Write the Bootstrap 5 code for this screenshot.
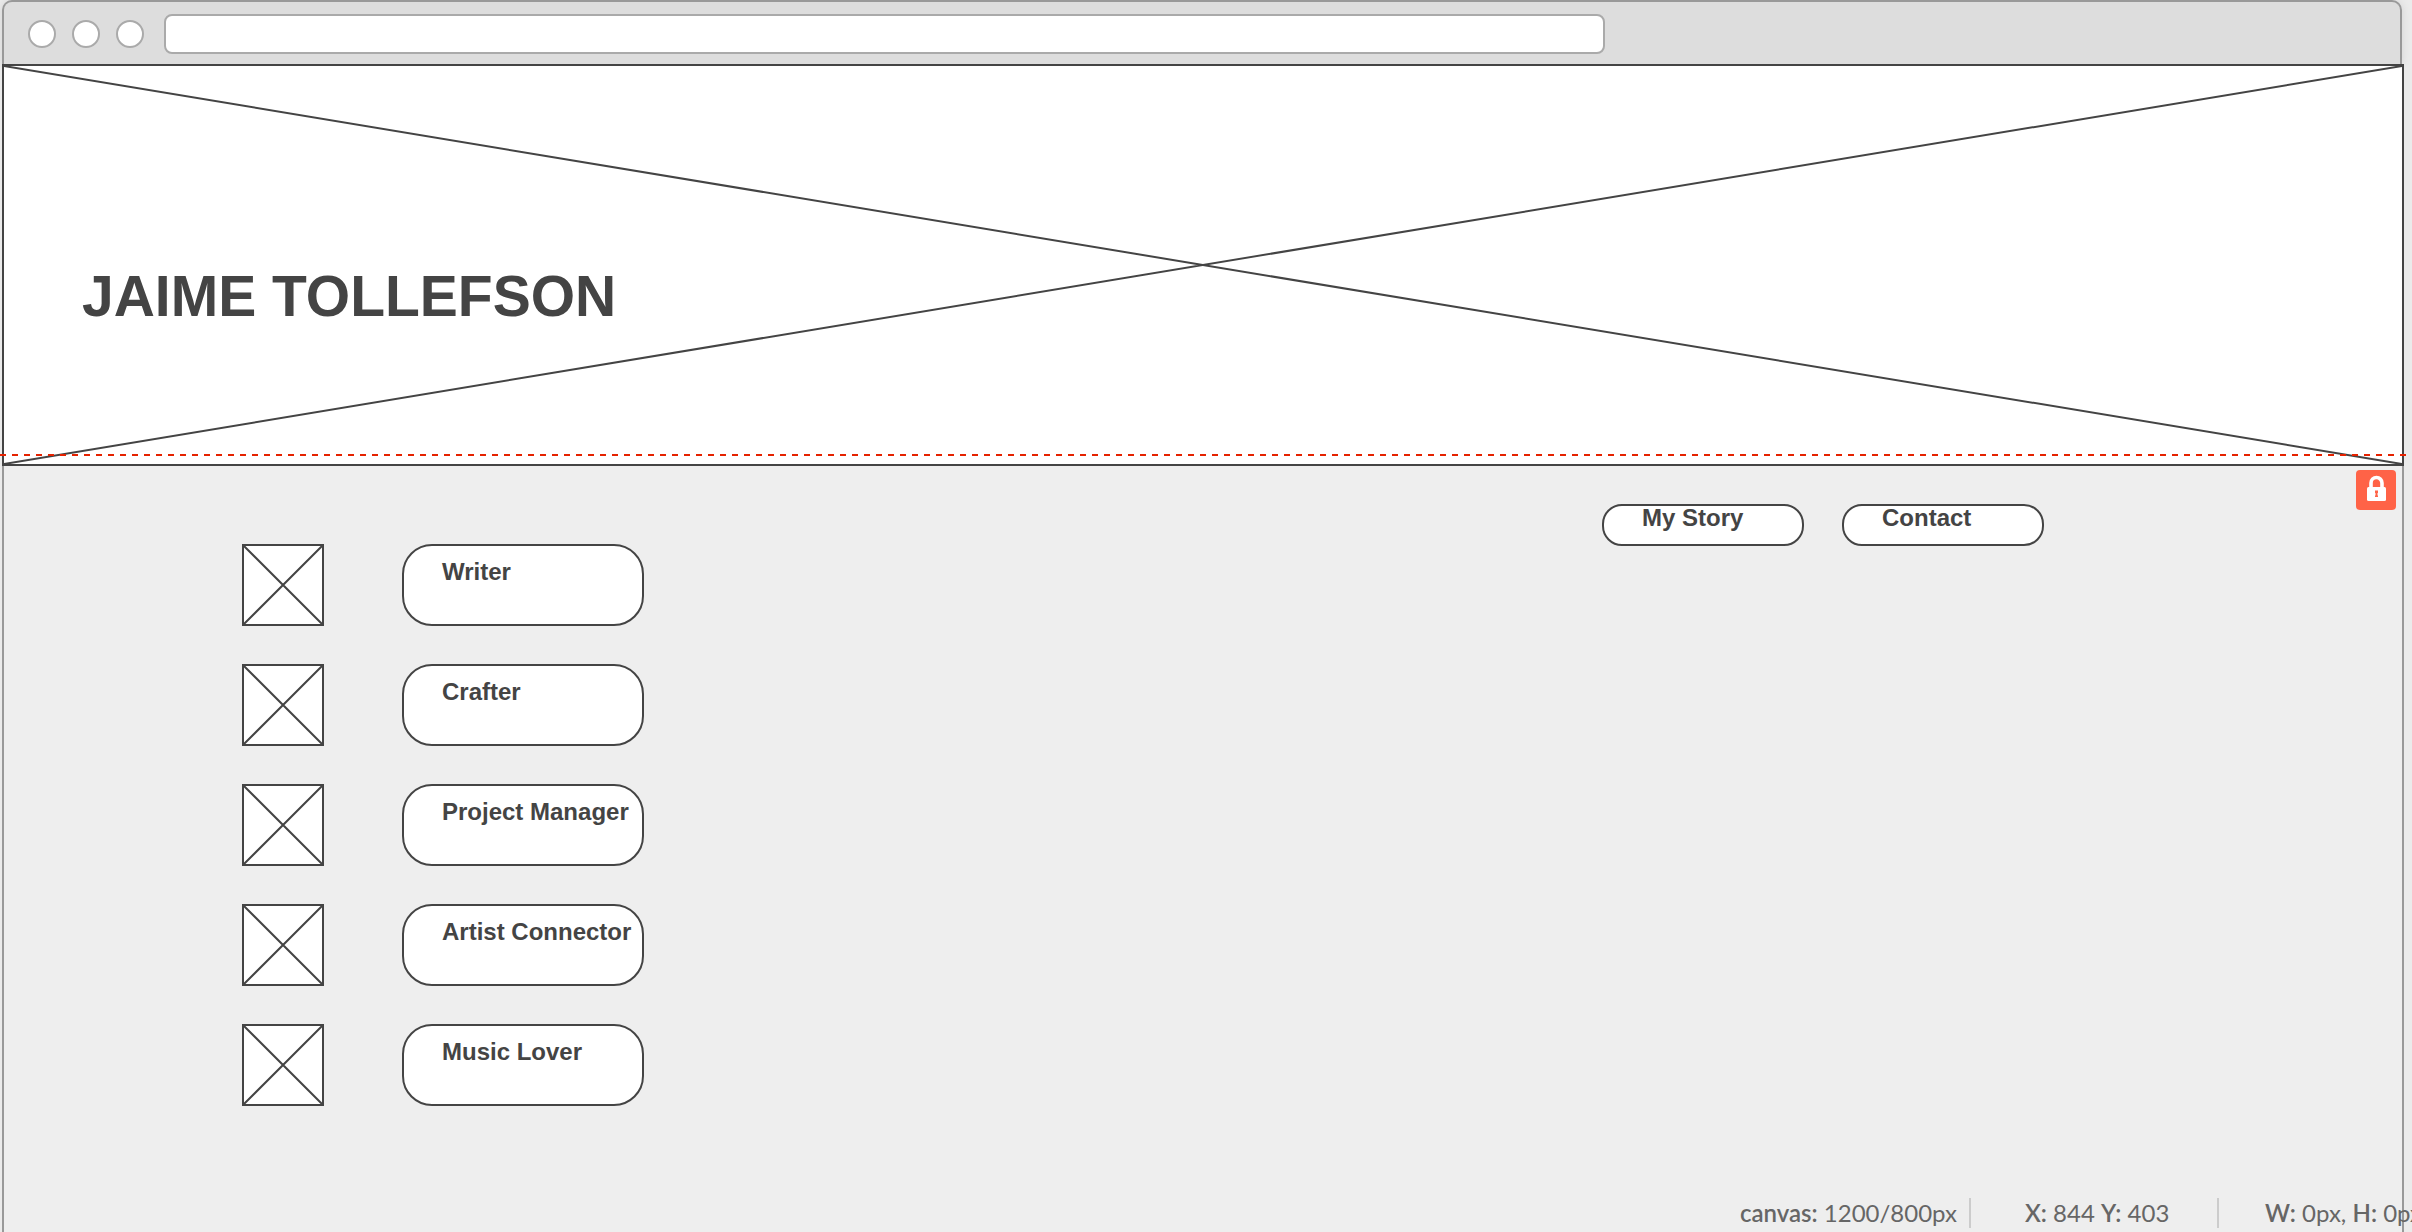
<!DOCTYPE html>
<html lang="en">
<head>
<meta charset="utf-8">
<meta name="viewport" content="width=device-width, initial-scale=1">
<title>Jaime Tollefson – wireframe</title>
<link href="https://cdn.jsdelivr.net/npm/bootstrap@5.3.0/dist/css/bootstrap.min.css" rel="stylesheet">
<style>
:root { --ink: #444; --line: #999; }
body { background: #ebebeb; color: var(--ink); font-family: "Liberation Sans", Arial, sans-serif; }
.stage { padding: 0 8px 0 2px; }
.toolbar { height: 64px; margin-right: 2px; padding: 2px 0 0 24px; background: #ddd; border: 2px solid var(--line); border-bottom: 0; border-radius: 10px 10px 0 0; box-shadow: 0 0 10px rgba(0,0,0,.1); }
.dot { width: 28px; height: 28px; margin-right: 16px; background: #fff; border: 2px solid #aaa; border-radius: 50%; }
.address { width: calc(60% + 18px); height: 40px; margin-left: 4px; padding: 0 12px; background: #fff; border: 2px solid #aaa; border-radius: 8px; }
.hero { height: 402px; background: #fff; border: 2px solid var(--ink); }
.cross { stroke: var(--ink); stroke-width: 2; fill: none; }
.hero-title { padding: 198px 0 0 78px; font-size: 57px; line-height: 64px; font-weight: 700; }
.guide { left: 0; right: 6px; top: 454px; height: 2px; background: repeating-linear-gradient(90deg, #e52200 0 6px, transparent 6px 12px); }
.canvas-area { background: #eee; border: solid var(--line); border-width: 0 2px; }
.roles { gap: 38px; padding: 78px 0 0 238px; }
.role-row { gap: 78px; }
.thumb { width: 82px; height: 82px; background: #fff; border: 2px solid var(--ink); }
.pill { background: #fff; border: 2px solid var(--ink); color: var(--ink); font-size: 24px; line-height: 28px; font-weight: 700; text-align: left; text-decoration: none; white-space: nowrap; padding: 0 0 0 38px; }
.pill-role { width: 242px; height: 82px; border-radius: 30px; padding-top: 12px; padding-bottom: 38px; }
.pill-nav { width: 202px; height: 42px; border-radius: 20px; line-height: 24px; }
.site-nav { gap: 38px; padding: 38px 358px 0 0; }
.lock-btn { top: 470px; right: 16px; width: 40px; height: 40px; padding: 0; border: 0; border-radius: 4px; background: #ff6347; }
.status { right: 0; bottom: 0; width: 682px; height: 34px; color: #666; font: 24px/30px Lato, sans-serif; white-space: nowrap; overflow: hidden; }
.status b { font-weight: 600; }
.rule-v { width: 2px; height: 30px; background: #ccc; }
.cell-size { width: 239px; padding-left: 10px; }
.cell-point { width: 246px; padding-left: 54px; }
.cell-box { padding-left: 46px; }
</style>
</head>
<body>
<div class="stage position-relative d-flex flex-column vh-100 overflow-hidden">
  <header class="toolbar d-flex align-items-center flex-shrink-0">
    <span class="dot"></span><span class="dot"></span><span class="dot"></span>
    <input class="address" type="text" aria-label="Address">
  </header>
  <section class="hero position-relative flex-shrink-0">
    <svg class="cross position-absolute top-0 start-0 w-100 h-100" viewBox="0 0 100 100" preserveAspectRatio="none"><path vector-effect="non-scaling-stroke" d="M0 0 100 100M100 0 0 100"/></svg>
    <h1 class="hero-title position-relative m-0">JAIME TOLLEFSON</h1>
  </section>
  <main class="canvas-area flex-grow-1 d-flex justify-content-between align-items-start">
    <div class="roles d-flex flex-column">
      <div class="role-row d-flex"><svg class="thumb cross" viewBox="0 0 78 78"><path d="M0 0 78 78M78 0 0 78"/></svg><button class="pill pill-role" type="button">Writer</button></div>
      <div class="role-row d-flex"><svg class="thumb cross" viewBox="0 0 78 78"><path d="M0 0 78 78M78 0 0 78"/></svg><button class="pill pill-role" type="button">Crafter</button></div>
      <div class="role-row d-flex"><svg class="thumb cross" viewBox="0 0 78 78"><path d="M0 0 78 78M78 0 0 78"/></svg><button class="pill pill-role" type="button">Project Manager</button></div>
      <div class="role-row d-flex"><svg class="thumb cross" viewBox="0 0 78 78"><path d="M0 0 78 78M78 0 0 78"/></svg><button class="pill pill-role" type="button">Artist Connector</button></div>
      <div class="role-row d-flex"><svg class="thumb cross" viewBox="0 0 78 78"><path d="M0 0 78 78M78 0 0 78"/></svg><button class="pill pill-role" type="button">Music Lover</button></div>
    </div>
    <nav class="site-nav d-flex">
      <a class="pill pill-nav" href="#story">My Story</a>
      <a class="pill pill-nav" href="#contact">Contact</a>
    </nav>
  </main>
  <div class="guide position-absolute"></div>
  <button class="lock-btn position-absolute d-flex align-items-center justify-content-center" type="button" aria-label="Locked">
    <svg width="40" height="40" viewBox="0 0 40 40"><path d="M15 18v-5a5.500 5.500 0 0 1 11 0v5" fill="none" stroke="#fff" stroke-width="3.600"/><rect x="11" y="17" width="19" height="14" rx="1.500" fill="#fff"/><path d="M19 20.500h3v2.500h-.5v2.500h.5v1.500h-3v-1.500h.5v-2.500h-.5z" fill="#ff6347"/></svg>
  </button>
  <footer class="status position-absolute d-flex">
    <span class="cell-size flex-shrink-0"><b>canvas:</b> 1200/800px</span>
    <span class="rule-v flex-shrink-0"></span>
    <span class="cell-point flex-shrink-0"><b>X:</b> 844 <b>Y:</b> 403</span>
    <span class="rule-v flex-shrink-0"></span>
    <span class="cell-box flex-shrink-0"><b>W:</b> 0px, <b>H:</b> 0px</span>
  </footer>
</div>
<script src="https://cdn.jsdelivr.net/npm/bootstrap@5.3.0/dist/js/bootstrap.bundle.min.js"></script>
</body>
</html>
